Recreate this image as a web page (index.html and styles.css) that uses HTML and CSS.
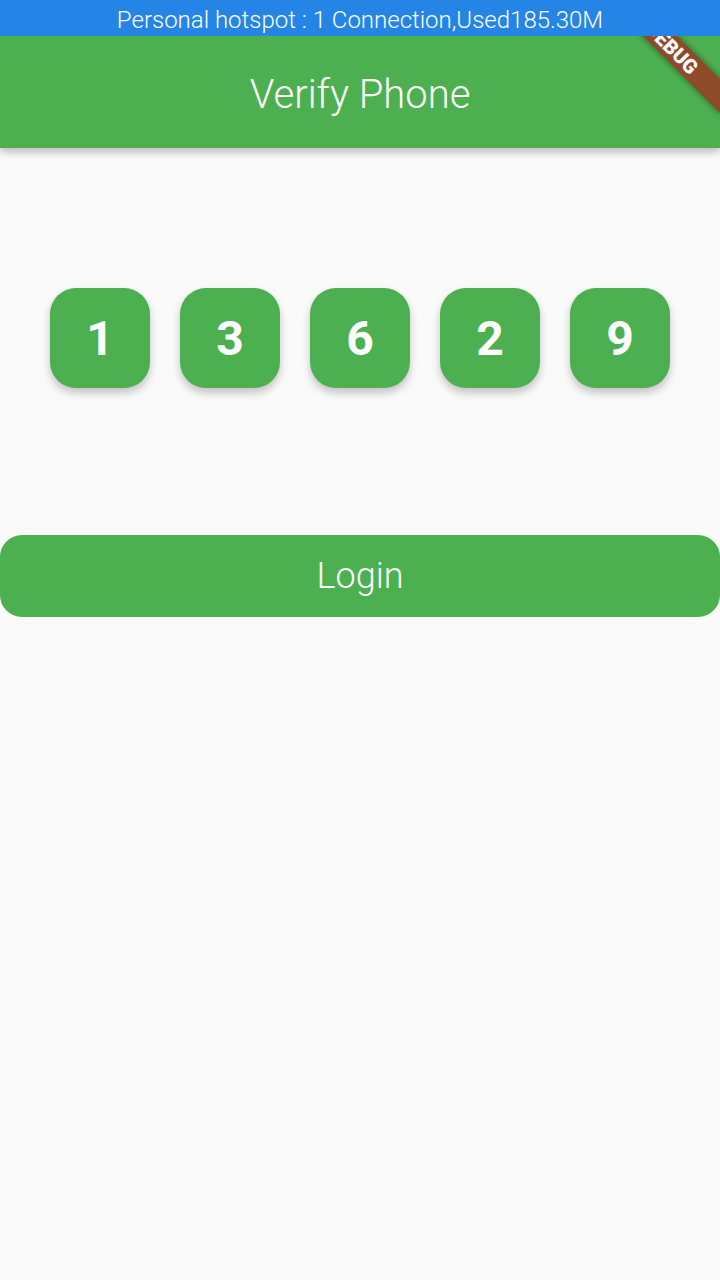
FILE: index.html
```html
<!DOCTYPE html>
<html>
<head>
<meta charset="utf-8">
<link rel="stylesheet" href="styles.css">
</head>
<body>
<div class="screen">
  <div class="status">Personal hotspot : 1 Connection,Used185.30M</div>
  <header class="appbar">Verify Phone</header>
  <main class="content">
    <div class="code">
      <div class="digit">1</div>
      <div class="digit">3</div>
      <div class="digit">6</div>
      <div class="digit">2</div>
      <div class="digit">9</div>
    </div>
    <button class="login">Login</button>
  </main>
  <div class="banner">DEBUG</div>
</div>
</body>
</html>
```
FILE: styles.css
```css
html, body {
  margin: 0;
  padding: 0;
}
body {
  width: 720px;
  height: 1280px;
  background: #fafafa;
  font-family: Roboto, "Noto Sans", sans-serif;
  overflow: hidden;
}
.screen {
  position: relative;
  width: 720px;
  height: 1280px;
  overflow: hidden;
  display: flex;
  flex-direction: column;
}
.status {
  position: relative;
  z-index: 3;
  height: 36px;
  background: #2585e6;
  color: #fff;
  font-size: 24px;
  font-weight: 300;
  line-height: 40px;
  text-align: center;
  white-space: nowrap;
}
.appbar {
  position: relative;
  z-index: 1;
  height: 112px;
  background: #4caf50;
  color: #fff;
  font-size: 40px;
  font-weight: 300;
  line-height: 117px;
  text-align: center;
  box-shadow: 0 4px 8px rgba(0,0,0,0.25);
}
.content {
  display: flex;
  flex-direction: column;
  padding-top: 140px;
}
.code {
  display: flex;
  justify-content: center;
  gap: 30px;
}
.digit {
  width: 100px;
  height: 100px;
  border-radius: 26px;
  background: #4caf50;
  color: #fff;
  font-size: 48px;
  font-weight: 700;
  display: flex;
  align-items: center;
  justify-content: center;
  box-shadow: 0 5px 8px rgba(0,0,0,0.22);
}
.login {
  margin-top: 147px;
  height: 82px;
  width: 720px;
  border: none;
  border-radius: 22px;
  background: #4caf50;
  color: #fff;
  font-family: Roboto, "Noto Sans", sans-serif;
  font-size: 36px;
  font-weight: 300;
  padding: 0;
}
.banner {
  position: absolute;
  z-index: 2;
  left: 592px;
  top: 36px;
  width: 160px;
  height: 24px;
  transform: rotate(45deg);
  background: #8f4a2c;
  color: #fff;
  font-size: 20px;
  font-weight: 900;
  line-height: 24px;
  text-align: center;
  box-shadow: 0 0 6px rgba(0,0,0,0.45);
}
```
